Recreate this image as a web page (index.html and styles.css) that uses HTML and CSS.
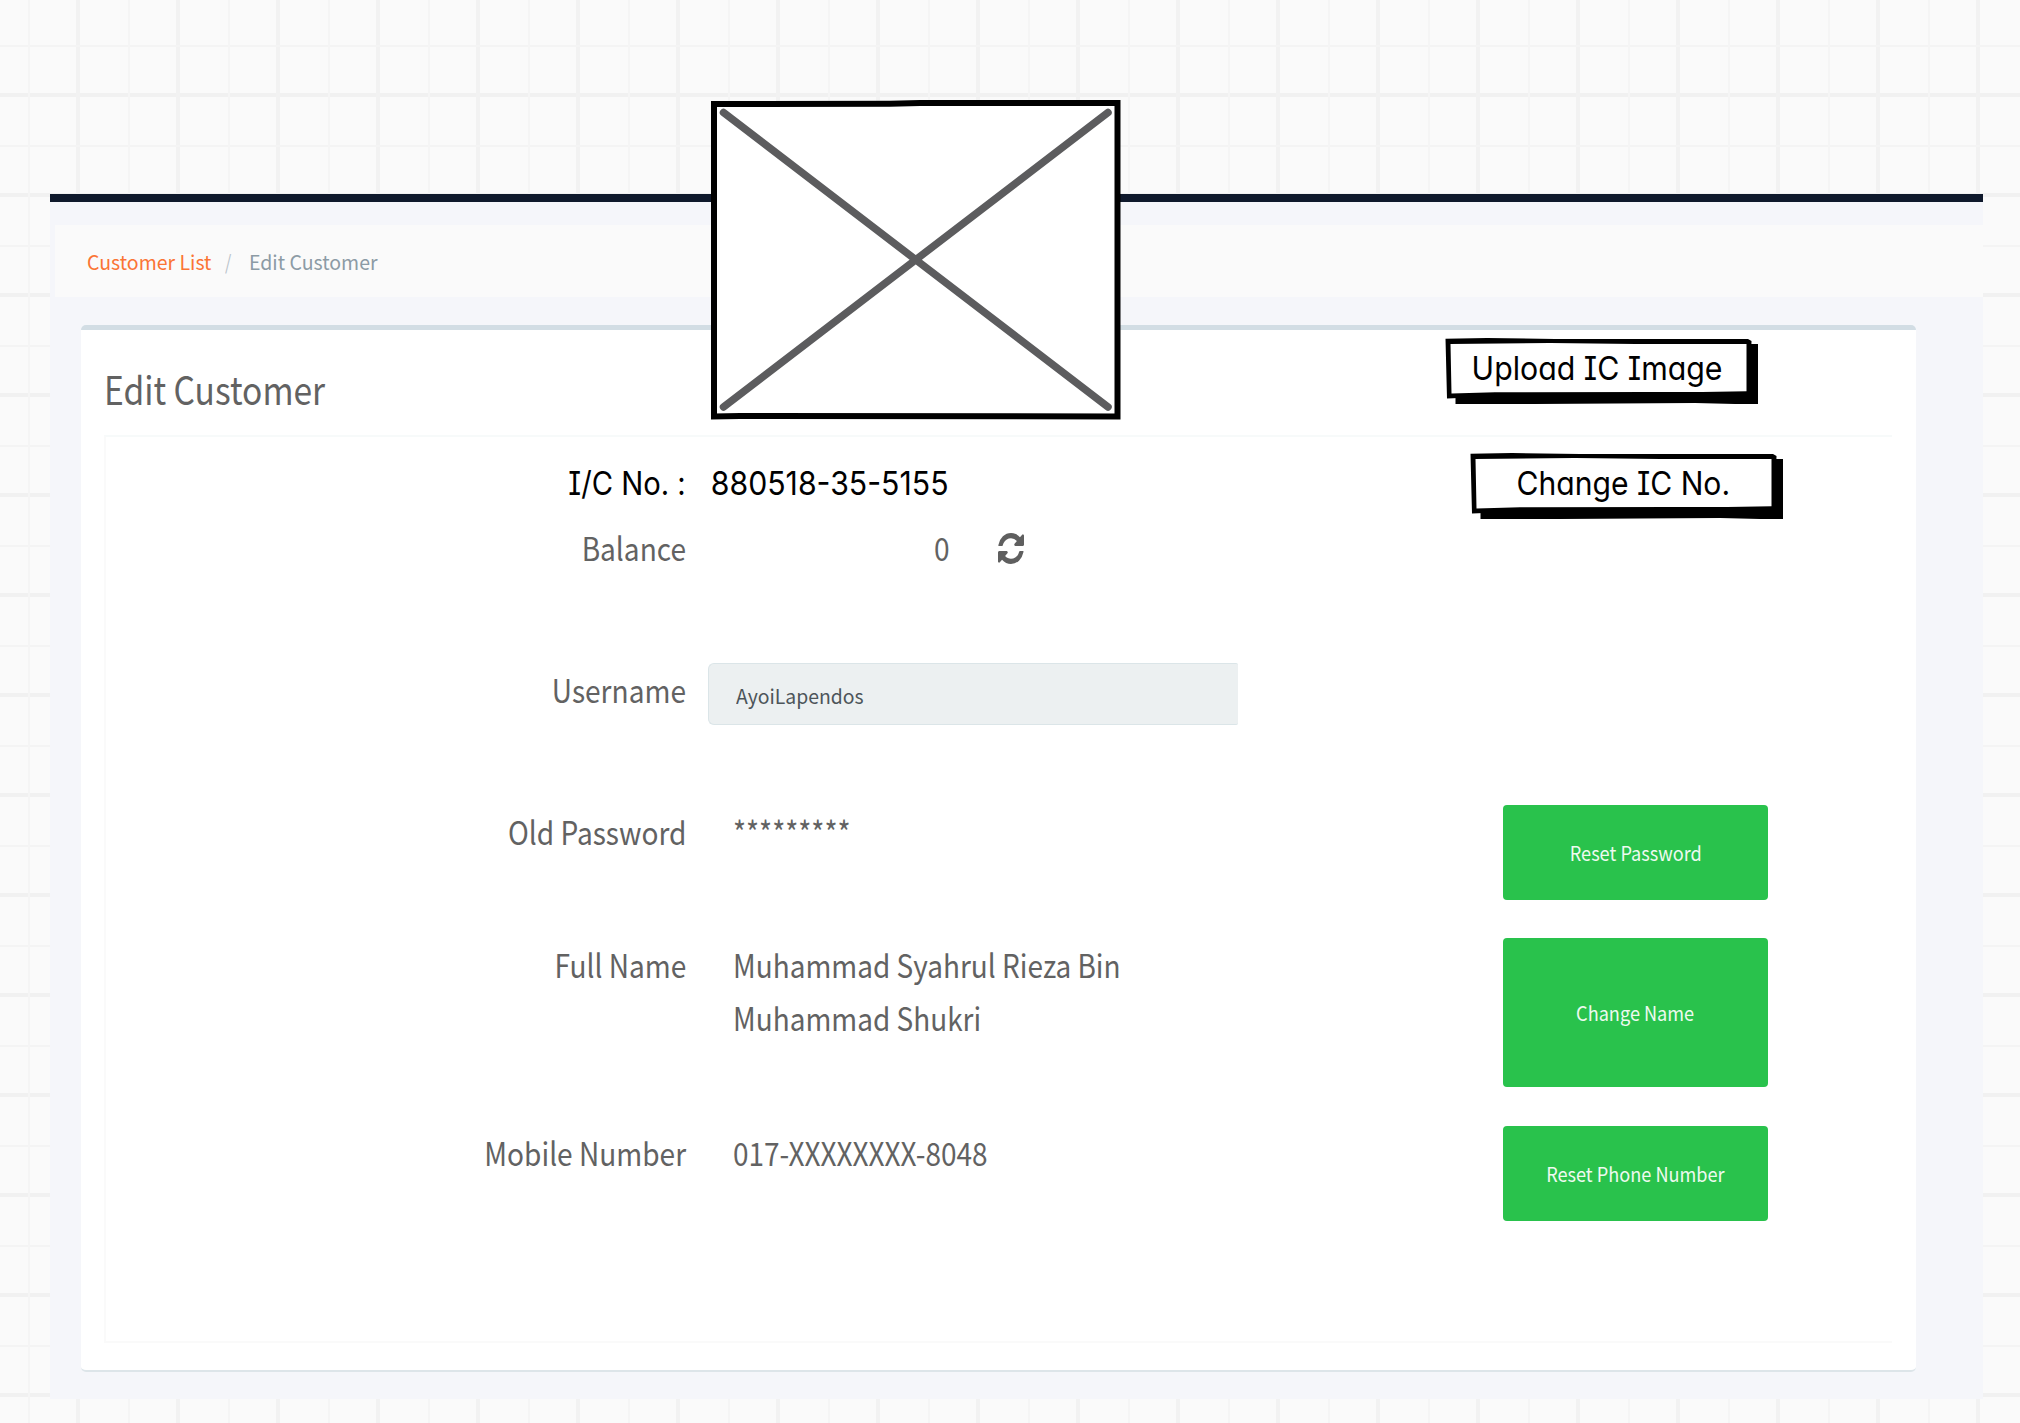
FILE: index.html
```html
<!DOCTYPE html>
<html lang="en">
<head>
<meta charset="utf-8">
<title>Edit Customer</title>
<link rel="stylesheet" href="styles.css">
</head>
<body>
<main class="panel">
  <nav class="breadcrumb">
    <a class="crumb-link">Customer List</a>
    <span class="crumb-sep">/</span>
    <span class="crumb-current">Edit Customer</span>
  </nav>
  <section class="card">
    <h1 class="card-title"><span>Edit Customer</span></h1>
    <div class="form">
      <div class="row row-ic">
        <div class="label sketch-text"><span class="fit ic-label">I/C No. :</span></div>
        <div class="value sketch-text"><span class="fit ic-value">880518-35-5155</span></div>
      </div>
      <div class="row row-balance">
        <div class="label"><span class="fit">Balance</span></div>
        <div class="value balance">
          <span class="fit">0</span>
          <svg class="refresh" viewBox="0 0 1536 1536" preserveAspectRatio="none"><path fill="#5f5f5f" d="M1511 928q0 5-1 7-64 268-268 434.5t-478 166.5q-146 0-282.5-55t-243.5-157l-129 129q-19 19-45 19t-45-19-19-45v-448q0-26 19-45t45-19h448q26 0 45 19t19 45-19 45l-137 137q71 66 161 102t187 36q134 0 250-65t186-179q11-17 53-117 8-23 30-23h192q13 0 22.5 9.5t9.5 22.5zm25-800v448q0 26-19 45t-45 19h-448q-26 0-45-19t-19-45 19-45l138-138q-148-137-349-137-134 0-250 65t-186 179q-11 17-53 117-8 23-30 23h-199q-13 0-22.5-9.5t-9.5-22.5v-7q65-268 270-434.5t480-166.5q146 0 284 55.5t245 156.5l130-129q19-19 45-19t45 19 19 45z"/></svg>
        </div>
      </div>
      <div class="row row-username">
        <div class="label"><span class="fit">Username</span></div>
        <div class="input"><span class="fit">AyoiLapendos</span></div>
      </div>
      <div class="row row-password">
        <div class="label"><span class="fit">Old Password</span></div>
        <div class="value text"><span class="fit">*********</span></div>
        <button class="btn"><span>Reset Password</span></button>
      </div>
      <div class="row row-name">
        <div class="label"><span class="fit">Full Name</span></div>
        <div class="value text"><span class="fit">Muhammad Syahrul Rieza Bin<br>Muhammad Shukri</span></div>
        <button class="btn btn-tall"><span>Change Name</span></button>
      </div>
      <div class="row row-phone">
        <div class="label"><span class="fit">Mobile Number</span></div>
        <div class="value text"><span class="fit">017-XXXXXXXX-8048</span></div>
        <button class="btn"><span>Reset Phone Number</span></button>
      </div>
    </div>
  </section>
</main>

<svg class="placeholder" viewBox="0 0 411 321">
  <path d="M4 4 180 3.700 210 3H407.500V316.500L30 316 4 316.500Z" fill="#fff" stroke="#000" stroke-width="6"/>
  <path d="M13.500 12.500 398 307M398 12.500 13.500 307" stroke="#5c5c5e" stroke-width="7.500" stroke-linecap="round"/>
</svg>

<button class="sketch-btn upload">
  <svg viewBox="0 0 314 67"><use href="#sketch-frame"/></svg>
  <span>Upload IC Image</span>
</button>
<button class="sketch-btn change">
  <svg viewBox="0 0 314 67">
    <g id="sketch-frame">
      <path d="M10.500 54 301 48V6H313V66H290L250 65 90 66H10.500Z" fill="#000"/>
      <path d="M.5.8 42 0 110 1H303L306.500 3 305 56 60 58 2 60.500Z" fill="#000"/>
      <path d="M5.500 6 105 5 190 6H301.500V53.300L257 54H200L50 54.300 6.500 55.500Z" fill="#fff"/>
    </g>
  </svg>
  <span>Change IC No.</span>
</button>
</body>
</html>
```
FILE: styles.css
```css
* { box-sizing: border-box; }

body {
  margin: 0;
  width: 2020px;
  height: 1423px;
  overflow: hidden;
  position: relative;
  display: flex;
  padding: 194px 37px 24px 50px;
  font-family: "Noto Sans CJK SC", "Noto Sans", sans-serif;
  color: #626262;
  background-color: #fafafa;
  background-image:
    linear-gradient(90deg, #f5f5f5 2px, transparent 2px),
    linear-gradient(#f4f4f4 2px, transparent 2px),
    linear-gradient(90deg, #f2f2f2 4px, transparent 4px),
    linear-gradient(#f1f1f1 4px, transparent 4px);
  background-size: 100px 100px;
  background-position: 28px 0, 0 45px, 76px 0, 0 93px;
}

button { border: 0; padding: 0; font: inherit; }

.panel {
  flex: 1;
  border-top: 8px solid #0f192c;
  background: #f5f6fa;
}

.breadcrumb {
  display: flex;
  height: 72px;
  margin: 23px 0 0 5px;
  padding-left: 32px;
  font-size: 20px;
  line-height: 74px;
  background: #fafafa;
}
.crumb-link { width: 138px; color: #fb7434; transform: scaleX(.975); transform-origin: 0 0; }
.crumb-sep { width: 24px; color: #b9c3ca; transform: scaleX(.8); transform-origin: 0 0; }
.crumb-current { color: #8c9ba5; transform: scaleX(.975); transform-origin: 0 0; }

.card {
  width: 1835px;
  height: 1047px;
  margin: 28px 0 0 31px;
  padding: 33px 24px 0 23px;
  border-top: 5px solid #d2dde4;
  border-bottom: 2px solid #dde5e9;
  border-radius: 5px;
  background: #fff;
}
.card-title {
  margin: 0;
  height: 72px;
  font-size: 39px;
  font-weight: 400;
  line-height: 50px;
}
.card-title span { display: inline-block; transform: scaleX(.86); transform-origin: 0 0; }

.form {
  height: 908px;
  padding-top: 20px;
  border: solid #fafafa;
  border-width: 2px 0 2px 2px;
  border-top-color: #f7fafa;
}
.row {
  display: grid;
  grid-template-columns: 580px 530px 265px;
  column-gap: 22px;
  align-items: start;
  font-size: 32px;
  line-height: 53px;
}
.row-ic { height: 64px; }
.row-balance { height: 142px; }
.row-username { height: 142px; }
.row-password { height: 133px; }
.row-name { height: 188px; }

.fit { display: inline-block; white-space: nowrap; transform: scaleX(.877); transform-origin: 0 0; }
.label { text-align: right; }
.label .fit { transform-origin: 100% 0; }
.value.text { padding-left: 25px; }
.value.text .fit { transform: scaleX(.874); }

.sketch-text { font-family: Inter, sans-serif; font-size: 33px; font-feature-settings: "cv11", "cv08"; color: #000; }
.label .ic-label { transform: scaleX(.885); }
.ic-value { padding-left: 3px; transform: scaleX(.916); }

.balance { display: flex; padding-left: 226px; }
.balance .fit { width: 64px; }
.refresh { width: 26px; height: 31px; margin-top: 12px; }

.input {
  height: 62px;
  padding-left: 27px;
  font-size: 20px;
  line-height: 64px;
  color: #4d555a;
  background: #ecf0f1;
  border: 1px solid #dbe5e8;
  border-right: 0;
  border-radius: 6px 2px 2px 6px;
}
.input .fit { transform: scaleX(.97); }

.btn {
  grid-column: 3;
  height: 95px;
  margin-left: 243px;
  width: 265px;
  border-radius: 4px;
  font-size: 20px;
  line-height: 29px;
  color: #eefaf0;
  background: #29c24c;
}
.btn span { display: inline-block; transform: scaleX(.907); }
.btn-tall { height: 149px; }

.placeholder { position: absolute; left: 710px; top: 100px; width: 411px; height: 321px; }

.sketch-btn {
  position: absolute;
  width: 314px;
  height: 67px;
  background: none;
  font: 33px/60px Inter, sans-serif;
  font-feature-settings: "cv11", "cv08";
  color: #000;
  text-align: left;
}
.sketch-btn svg { position: absolute; inset: 0; }
.sketch-btn span { position: relative; display: block; height: 67px; white-space: nowrap; transform-origin: 0 0; }
.upload { left: 1445px; top: 338px; }
.upload span { padding-left: 29px; transform: scaleX(.918); }
.change { left: 1470px; top: 453px; }
.change span { padding-left: 51px; transform: scaleX(.912); }
```
